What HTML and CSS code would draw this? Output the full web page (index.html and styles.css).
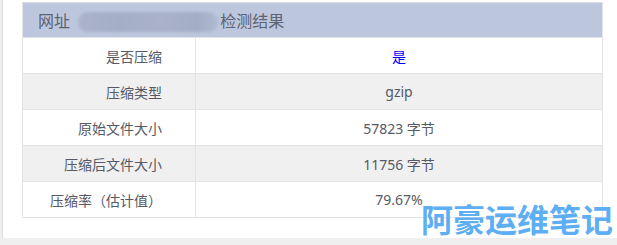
FILE: index.html
```html
<!DOCTYPE html>
<html lang="zh-CN">
<head>
<meta charset="utf-8">
<title>检测结果</title>
<link rel="stylesheet" href="styles.css">
</head>
<body>
<div class="page">
  <table class="result">
    <thead>
      <tr>
        <th colspan="2" class="head">网址 <span class="blur"></span>检测结果</th>
      </tr>
    </thead>
    <tbody>
      <tr><td class="label">是否压缩</td><td class="value yes">是</td></tr>
      <tr class="alt"><td class="label">压缩类型</td><td class="value">gzip</td></tr>
      <tr><td class="label">原始文件大小</td><td class="value">57823 字节</td></tr>
      <tr class="alt"><td class="label">压缩后文件大小</td><td class="value">11756 字节</td></tr>
      <tr><td class="label">压缩率（估计值）</td><td class="value">79.67%</td></tr>
    </tbody>
  </table>
  <div class="watermark">阿豪运维笔记</div>
</div>
</body>
</html>
```

FILE: styles.css
```css
html, body {
  margin: 0;
  padding: 0;
}
body {
  background: #efefef;
  font-family: "Noto Sans", "Noto Sans CJK SC", sans-serif;
  width: 617px;
  height: 245px;
  overflow: hidden;
}
.page {
  position: relative;
  margin-left: 2px;
  width: 591px;
  height: 236px;
  background: #ffffff;
  border-left: 1px solid #dcdcdc;
  padding: 2px 10px 0 19px;
}
.result {
  width: 581px;
  border-collapse: collapse;
  border: 1px solid #e3e3e3;
  font-size: 14px;
  color: #555a66;
}
.head {
  background: #bcc7de;
  height: 34px;
  padding: 0 0 0 15px;
  text-align: left;
  font-weight: normal;
  font-size: 16px;
  color: #5c6370;
  border-top: 1px solid #dedede;
}
.blur {
  display: inline-block;
  vertical-align: middle;
  width: 140px;
  height: 20px;
  margin: 0 2px 0 4px;
  border-radius: 10px;
  background: linear-gradient(90deg, #aab3c9 0%, #a4aec6 30%, #a9b2c8 60%, #a3adc4 85%, #b0b9cf 100%);
  filter: blur(1.5px);
}
.result td {
  height: 35px;
  padding: 0;
  border: 1px solid #e3e3e3;
}
.alt td {
  background: #f0f0f0;
}
.label {
  width: 139px;
  padding-right: 33px !important;
  text-align: right;
}
.value {
  text-align: center;
}
.yes {
  color: #0000ff;
}
.watermark {
  position: absolute;
  left: 418px;
  top: 198px;
  font-family: "Noto Sans CJK SC", sans-serif;
  font-weight: bold;
  font-size: 32px;
  line-height: 40px;
  color: #5eaef4;
  white-space: nowrap;
}
```
